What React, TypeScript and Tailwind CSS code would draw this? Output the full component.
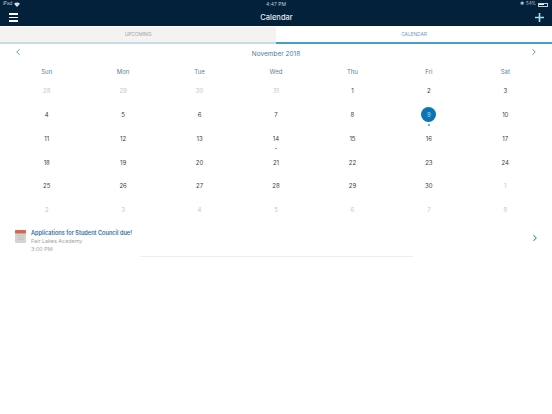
import { ChevronLeft, ChevronRight } from "lucide-react";

const days = ["Sun", "Mon", "Tue", "Wed", "Thu", "Fri", "Sat"];

const weeks: number[][] = [
    [28, 29, 30, 31, 1, 2, 3],
    [4, 5, 6, 7, 8, 9, 10],
    [11, 12, 13, 14, 15, 16, 17],
    [18, 19, 20, 21, 22, 23, 24],
    [25, 26, 27, 28, 29, 30, 1],
    [2, 3, 4, 5, 6, 7, 8],
];

function DayCell({ day, muted, selected, dot }: { day: number; muted: boolean; selected: boolean; dot: boolean }) {
    return (
        <div className="relative flex h-[23.75px] items-center justify-center">
            {selected ? (
                <div className="flex h-[15px] w-[15px] items-center justify-center rounded-full bg-[#0a74b4] text-[#b9d6ea]">
                    {day}
                </div>
            ) : (
                <span className={muted ? "text-[#c4c6c8]" : "text-[#3a3d40]"}>{day}</span>
            )}
            {dot && <div className="absolute bottom-[1px] left-1/2 h-[1.5px] w-[2px] -translate-x-1/2 bg-[#62b5e0]" />}
        </div>
    );
}

export default function App() {
    return (
        <div className="flex h-[414px] w-[552px] flex-col overflow-hidden bg-white font-['Inter','Liberation_Sans',sans-serif]">
            {/* Status bar + nav */}
            <div className="h-[26px] bg-[#03213a] text-white">
                <div className="flex h-[9px] items-center justify-between px-[3px] text-[4.5px] leading-none text-[#c5ced6]">
                    <div className="flex w-[100px] items-center gap-[2px]">
                        <span>iPad</span>
                        <svg width="6" height="5" viewBox="0 0 12 10" fill="#d5dce2">
                            <path d="M6 10 0 3.5C3.5 0 8.5 0 12 3.5z" />
                        </svg>
                    </div>
                    <span className="text-[5px]">4:47 PM</span>
                    <div className="flex w-[100px] items-center justify-end gap-[2px] pr-[1px]">
                        <span>✱</span>
                        <span>54%</span>
                        <div className="flex h-[4px] w-[10px] items-center border-[0.5px] border-[#c5ced6] p-[0.5px]">
                            <div className="h-full w-[5px] bg-white" />
                        </div>
                    </div>
                </div>
                <div className="flex h-[17px] items-center justify-between pl-[9px] pr-[8px]">
                    <div className="flex w-[9px] flex-col gap-[2px]">
                        <div className="h-[1.5px] bg-white" />
                        <div className="h-[1.5px] bg-white" />
                        <div className="h-[1.5px] bg-white" />
                    </div>
                    <span className="pt-px text-[7.5px] font-medium text-[#e8edf1]">Calendar</span>
                    <svg width="9" height="9" viewBox="0 0 10 10" stroke="#a5dcef" strokeWidth="1.8">
                        <path d="M5 0v10M0 5h10" />
                    </svg>
                </div>
            </div>

            {/* Tabs */}
            <div className="mt-px flex h-[17px] text-[5px] tracking-tight">
                <div className="flex flex-1 items-center justify-center border-b-[2px] border-[#c5dcea] bg-[#f4f3f2] text-[#a3a5a7]">
                    UPCOMING
                </div>
                <div className="flex flex-1 items-center justify-center border-b-[2px] border-[#4b9cc9] bg-white text-[#6f9fbf]">
                    CALENDAR
                </div>
            </div>

            {/* Month header */}
            <div className="relative flex h-[21px] items-center justify-center pt-px text-[6.5px] text-[#4a7c9f]">
                November 2018
                <ChevronLeft className="absolute left-[13px] top-[3px] h-[10px] w-[10px] text-[#3b84b5]" strokeWidth={2} />
                <ChevronRight className="absolute right-[13px] top-[3px] h-[10px] w-[10px] text-[#3b84b5]" strokeWidth={2} />
            </div>

            {/* Calendar grid */}
            <div className="px-[8.5px] text-[6px]">
                <div className="grid h-[14px] grid-cols-7 items-center pb-[2px] text-center text-[#5c8199]">
                    {days.map((d) => (
                        <div key={d}>{d}</div>
                    ))}
                </div>
                {weeks.map((week, w) => (
                    <div key={w} className="grid grid-cols-7 text-center">
                        {week.map((d, i) => (
                            <DayCell
                                key={i}
                                day={d}
                                muted={(w === 0 && d > 20) || (w === 4 && d === 1) || w === 5}
                                selected={w === 1 && d === 9}
                                dot={(w === 1 && d === 9) || (w === 2 && d === 14)}
                            />
                        ))}
                    </div>
                ))}
            </div>

            {/* Event row */}
            <div className="mt-[7px] flex items-start pl-[15px] pr-[13px]">
                <svg className="mt-[1px]" width="11" height="13" viewBox="0 0 11 13">
                    <rect width="11" height="13" rx="1" fill="#d6d4d2" />
                    <rect width="11" height="3.5" rx="1" fill="#d8674f" />
                    <path d="M2 5.5h7M2 7.5h7M2 9.5h7" stroke="#bdbbb9" strokeWidth="0.6" />
                </svg>
                <div className="ml-[5px] flex flex-1 flex-col">
                    <span className="text-[5.6px] font-semibold leading-[8px] text-[#2f6fa5]">Applications for Student Council due!</span>
                    <span className="text-[5.4px] leading-[8px] text-[#a2a4a6]">Fair Lakes Academy</span>
                    <span className="text-[5.4px] leading-[8px] text-[#a2a4a6]">3:00 PM</span>
                </div>
                <ChevronRight className="mt-[4px] mr-[-1px] h-[10px] w-[10px] text-[#2a8a9c]" strokeWidth={2.5} />
            </div>
            <div className="ml-[140px] mt-[3px] h-px w-[273px] bg-[#eeeeee]" />
        </div>
    );
}
